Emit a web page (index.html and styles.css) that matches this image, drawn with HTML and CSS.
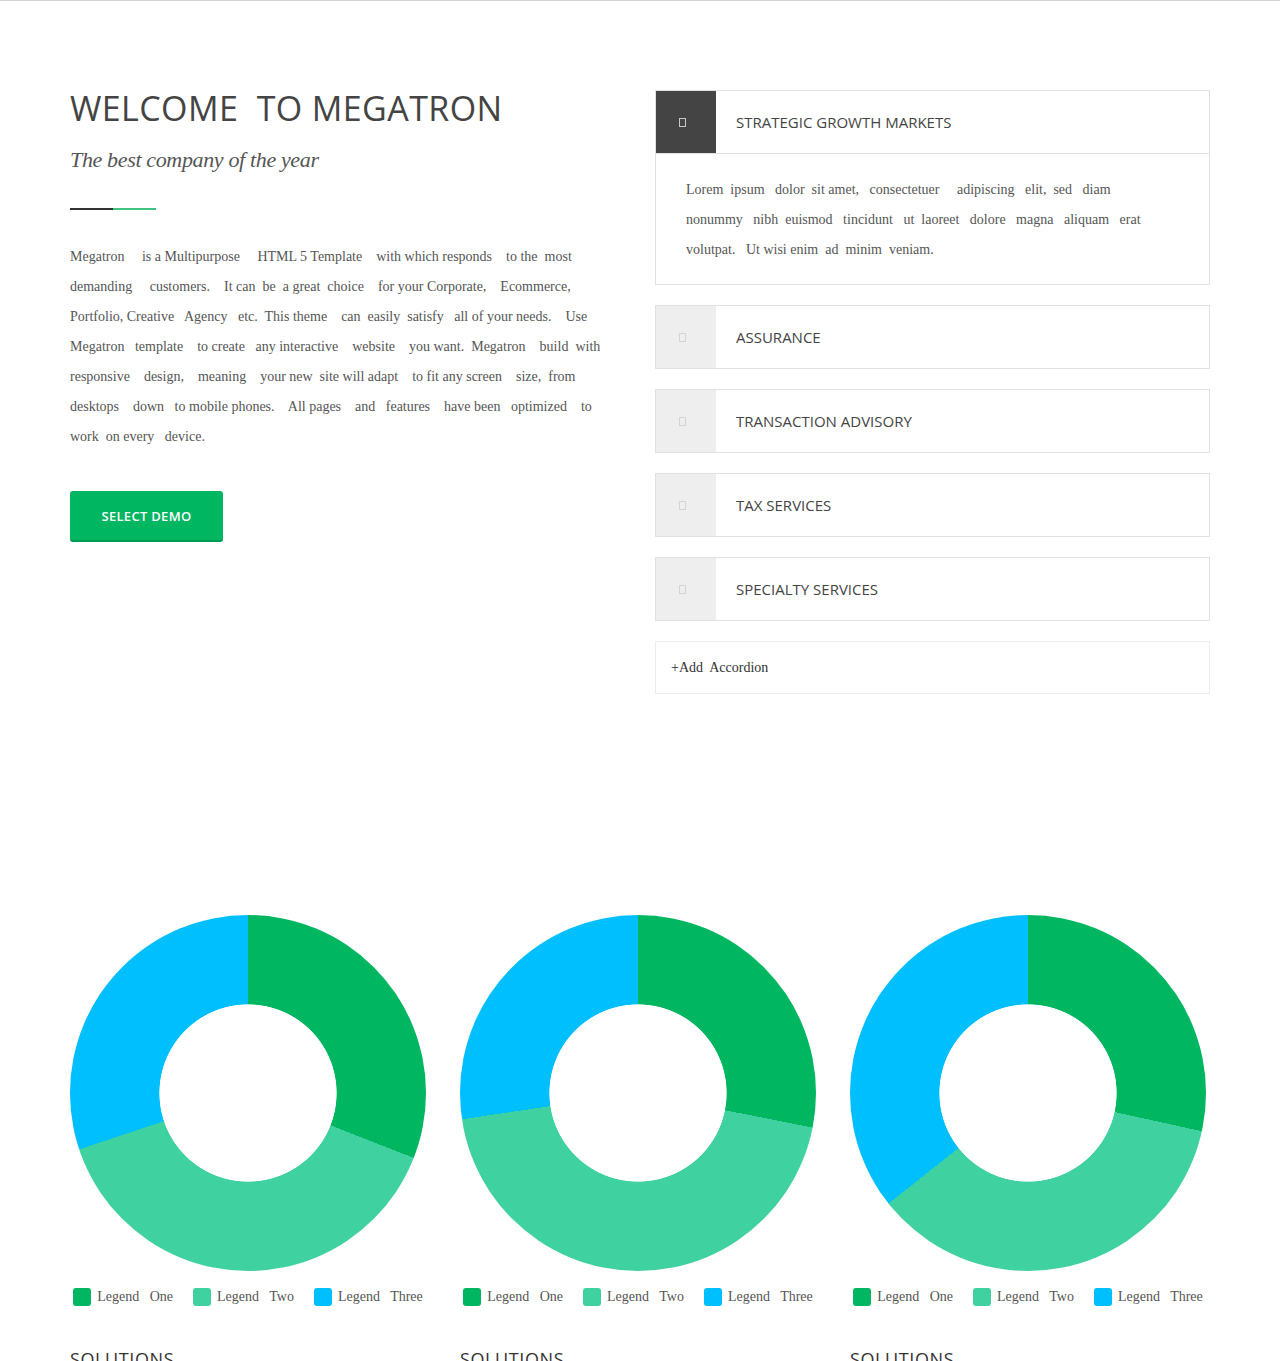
FILE: index.html
```html
<!DOCTYPE html>
<html lang="en">
<head>
<meta charset="utf-8">
<title>Megatron</title>
<link rel="stylesheet" href="styles.css">
</head>
<body>
<div class="topline"></div>
<div class="page">
  <section class="intro">
    <div class="intro-left">
      <h1 class="title">WELCOME  TO MEGATRON</h1>
      <p class="tagline">The best company of the year</p>
      <div class="divider"><span class="dark"></span><span class="green"></span></div>
      <p class="lead"><span>Megatron     is a Multipurpose     HTML 5 Template    with which responds    to the  most</span><span>demanding     customers.    It can  be  a great  choice    for your Corporate,    Ecommerce,</span><span>Portfolio, Creative   Agency   etc.  This theme    can  easily  satisfy   all of your needs.    Use</span><span>Megatron   template    to create   any interactive    website    you want.  Megatron    build  with</span><span>responsive    design,    meaning    your new  site will adapt    to fit any screen    size,  from</span><span>desktops    down   to mobile phones.    All pages    and   features    have been   optimized    to</span><span>work  on every   device.</span></p>
      <a class="btn" href="#">SELECT DEMO</a>
    </div>
    <div class="accordion">
      <div class="acc-item open">
        <div class="acc-head"><span class="acc-icon"><span class="glyph"></span></span><span class="acc-title">STRATEGIC GROWTH MARKETS</span></div>
        <div class="acc-body"><span>Lorem  ipsum   dolor  sit amet,   consectetuer     adipiscing   elit,  sed   diam</span><span>nonummy   nibh  euismod   tincidunt   ut  laoreet   dolore   magna   aliquam   erat</span><span>volutpat.   Ut wisi enim  ad  minim  veniam.</span></div>
      </div>
      <div class="acc-item">
        <div class="acc-head"><span class="acc-icon"><span class="glyph"></span></span><span class="acc-title">ASSURANCE</span></div>
      </div>
      <div class="acc-item">
        <div class="acc-head"><span class="acc-icon"><span class="glyph"></span></span><span class="acc-title">TRANSACTION ADVISORY</span></div>
      </div>
      <div class="acc-item">
        <div class="acc-head"><span class="acc-icon"><span class="glyph"></span></span><span class="acc-title">TAX SERVICES</span></div>
      </div>
      <div class="acc-item">
        <div class="acc-head"><span class="acc-icon"><span class="glyph"></span></span><span class="acc-title">SPECIALTY SERVICES</span></div>
      </div>
      <div class="acc-add">+Add  Accordion</div>
    </div>
  </section>

  <section class="charts">
    <div class="chart-col">
      <div class="donut donut-a"></div>
      <ul class="legend">
        <li><span class="sw sw-1"></span><span class="lg">Legend   One</span></li>
        <li><span class="sw sw-2"></span><span class="lg">Legend   Two</span></li>
        <li><span class="sw sw-3"></span><span class="lg">Legend   Three</span></li>
      </ul>
      <h2 class="sol">SOLUTIONS</h2>
    </div>
    <div class="chart-col">
      <div class="donut donut-b"></div>
      <ul class="legend">
        <li><span class="sw sw-1"></span><span class="lg">Legend   One</span></li>
        <li><span class="sw sw-2"></span><span class="lg">Legend   Two</span></li>
        <li><span class="sw sw-3"></span><span class="lg">Legend   Three</span></li>
      </ul>
      <h2 class="sol">SOLUTIONS</h2>
    </div>
    <div class="chart-col">
      <div class="donut donut-c"></div>
      <ul class="legend">
        <li><span class="sw sw-1"></span><span class="lg">Legend   One</span></li>
        <li><span class="sw sw-2"></span><span class="lg">Legend   Two</span></li>
        <li><span class="sw sw-3"></span><span class="lg">Legend   Three</span></li>
      </ul>
      <h2 class="sol">SOLUTIONS</h2>
    </div>
  </section>
</div>
</body>
</html>
```
FILE: styles.css
```css
* { box-sizing: border-box; }
body {
  margin: 0;
  background: #fff;
  color: #555;
  font-family: "Liberation Serif", "Times New Roman", serif;
}
.topline { height: 1px; background: #d4d4d4; }
.page { width: 1140px; margin: 0 auto; }

.intro {
  display: grid;
  grid-template-columns: 555px 555px;
  column-gap: 30px;
  padding-top: 89px;
  align-items: start;
}
.title {
  margin: 0;
  font-family: "Open Sans", sans-serif;
  font-weight: 400;
  font-size: 34px;
  line-height: 36px;
  color: #444;
  white-space: pre;
  letter-spacing: 0.4px;
}
.tagline {
  margin: 19px 0 0;
  font-style: italic;
  font-size: 22px;
  line-height: 30px;
  letter-spacing: -0.35px;
  color: #555;
}
.divider { display: flex; margin-top: 33px; height: 2px; }
.divider .dark { width: 43px; background: #333; }
.divider .green { width: 43px; background: #3ec47f; }
.lead {
  margin: 32px 0 0;
  font-size: 14px;
  line-height: 30px;
  color: #555;
}
.lead span { display: block; white-space: pre; }
.btn {
  display: flex;
  align-items: center;
  justify-content: center;
  margin-top: 39px;
  width: 153px;
  height: 51px;
  background: #00b661;
  border-bottom: 2px solid #009a52;
  border-radius: 3px;
  color: #fff;
  font-family: "Open Sans", sans-serif;
  font-weight: 600;
  font-size: 13px;
  letter-spacing: 0.3px;
  text-decoration: none;
}

.accordion { display: flex; flex-direction: column; gap: 20px; }
.acc-item { border: 1px solid #e0e0e0; }
.acc-head { display: flex; height: 62px; }
.acc-item.open .acc-head { border-bottom: 1px solid #e0e0e0; height: 63px; }
.acc-icon {
  width: 60px;
  background: #eee;
  display: flex;
  align-items: center;
  padding-left: 23px;
}
.acc-item.open .acc-icon { background: #444; }
.glyph { width: 7px; height: 9px; border: 1px solid #d4d4d4; }
.acc-item.open .glyph { border-color: #c8c8c8; }
.acc-title {
  display: flex;
  align-items: center;
  padding-left: 20px;
  font-family: "Open Sans", sans-serif;
  font-size: 15px;
  color: #444;
}
.acc-body {
  height: 130px;
  padding: 21px 30px 19px;
  font-size: 14px;
  line-height: 30px;
  color: #555;
}
.acc-body span { display: block; white-space: pre; }
.acc-add {
  border: 1px solid #ececec;
  height: 53px;
  display: flex;
  align-items: center;
  padding-left: 15px;
  font-size: 14px;
  color: #333;
  white-space: pre;
}

.charts {
  display: grid;
  grid-template-columns: repeat(3, 360px);
  column-gap: 30px;
  margin-top: 221px;
}
.donut { width: 356px; height: 356px; border-radius: 50%; }
.donut-a {
  background:
    radial-gradient(circle closest-side, #fff 49.6%, transparent 50%),
    conic-gradient(#00b661 0 111.4deg, #40d1a0 111.4deg 251.5deg, #00bfff 251.5deg 360deg);
}
.donut-b {
  background:
    radial-gradient(circle closest-side, #fff 49.6%, transparent 50%),
    conic-gradient(#00b661 0 101.2deg, #40d1a0 101.2deg 261.5deg, #00bfff 261.5deg 360deg);
}
.donut-c {
  background:
    radial-gradient(circle closest-side, #fff 49.6%, transparent 50%),
    conic-gradient(#00b661 0 102.4deg, #40d1a0 102.4deg 231.6deg, #00bfff 231.6deg 360deg);
}
.legend {
  list-style: none;
  margin: 17px 0 0;
  padding: 0;
  width: 356px;
  display: flex;
  justify-content: center;
  gap: 20px;
}
.legend li { display: flex; align-items: center; gap: 6px; }
.sw { width: 18px; height: 18px; border-radius: 3px; }
.sw-1 { background: #00b661; }
.sw-2 { background: #40d1a0; }
.sw-3 { background: #00bfff; }
.lg { font-size: 14px; line-height: 18px; white-space: pre; color: #555; }
.sol {
  margin: 41px 0 0;
  font-family: "Open Sans", sans-serif;
  font-weight: 400;
  font-size: 18px;
  line-height: 24px;
  letter-spacing: 0.6px;
  color: #333;
}
```
